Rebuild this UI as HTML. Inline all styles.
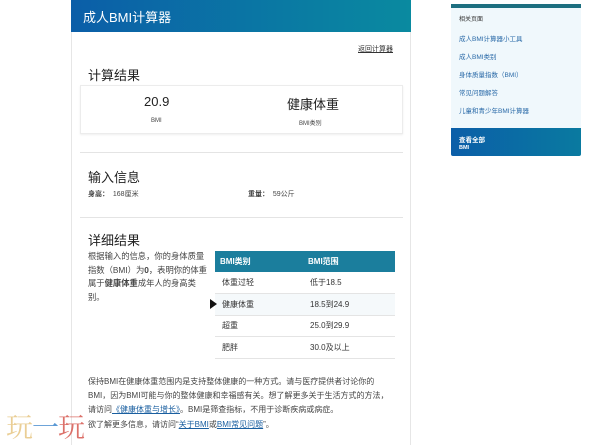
<!DOCTYPE html>
<html><head><meta charset="utf-8"><style>
*{margin:0;padding:0;box-sizing:border-box}
body{width:600px;height:445px;background:#fff;position:relative;overflow:hidden;font-family:"Liberation Sans","Noto Sans CJK SC",sans-serif;color:#333}
.a{position:absolute;white-space:nowrap}
.hdr{left:71px;top:0;width:340px;height:32px;background:linear-gradient(90deg,#0b5ea8,#0a8aa0);color:#fff;font-size:13px;padding:7px 0 0 12px}
.main{left:71px;top:32px;width:340px;height:413px;border-left:1px solid #e6e6e6;border-right:1px solid #e6e6e6;background:#fff}
.h2{font-size:13px;color:#222}
.s{font-size:7px;color:#444}
.p{font-size:8px;color:#444}
a{color:#1a5fa0;text-decoration:underline}
table{border-collapse:collapse;font-size:8px}
td{height:21.5px;padding-left:7px;border-bottom:1px solid #e4e4e4;color:#333}
th{height:21px;background:#1b7e9d;color:#fff;text-align:left;padding-left:5px;font-weight:bold;font-size:8px}
</style></head><body>
<div class="a hdr">成人BMI计算器</div>
<div class="a main"></div>
<div class="a s" style="left:358px;top:44px;text-decoration:underline;color:#333">返回计算器</div>
<div class="a h2" style="left:88px;top:65px">计算结果</div>
<div class="a" style="left:80px;top:85px;width:323px;height:49px;border:1px solid #ececec;box-shadow:0 1px 2px #eee"></div>
<div class="a" style="left:144px;top:94px;font-size:13px;color:#222">20.9</div>
<div class="a s" style="left:151px;top:118px;font-size:6px">BMI</div>
<div class="a" style="left:287px;top:94px;font-size:13px;color:#222">健康体重</div>
<div class="a s" style="left:299px;top:118px;font-size:6px">BMI类别</div>
<div class="a" style="left:80px;top:152px;width:323px;border-top:1px solid #e4e4e4"></div>
<div class="a h2" style="left:88px;top:167px">输入信息</div>
<div class="a s" style="left:88px;top:189px"><b>身高：</b>&nbsp; 168厘米</div>
<div class="a s" style="left:248px;top:189px"><b>重量：</b>&nbsp; 59公斤</div>
<div class="a" style="left:80px;top:217px;width:323px;border-top:1px solid #e4e4e4"></div>
<div class="a h2" style="left:88px;top:230px">详细结果</div>
<div class="a p" style="left:88px;top:250px;line-height:13.7px;white-space:normal;width:119px;font-size:8.3px">根据输入的信息，你的身体质量指数（BMI）为<b>0</b>，表明你的体重属于<b>健康体重</b>成年人的身高类别。</div>
<table class="a" style="left:215px;top:251px;width:180px">
<tr><th style="width:88px">BMI类别</th><th>BMI范围</th></tr>
<tr><td>体重过轻</td><td>低于18.5</td></tr>
<tr style="background:#f5f9fb"><td>健康体重</td><td>18.5到24.9</td></tr>
<tr><td>超重</td><td>25.0到29.9</td></tr>
<tr><td>肥胖</td><td>30.0及以上</td></tr>
</table>
<div class="a" style="left:210px;top:299px;width:0;height:0;border-left:7px solid #111;border-top:5px solid transparent;border-bottom:5px solid transparent"></div>
<div class="a p" style="left:88px;top:375px;line-height:14px;white-space:normal;width:302px">保持BMI在健康体重范围内是支持整体健康的一种方式。请与医疗提供者讨论你的BMI，因为BMI可能与你的整体健康和幸福感有关。想了解更多关于生活方式的方法，请访问<a>《健康体重与增长》</a>。BMI是筛查指标，不用于诊断疾病或病症。</div>
<div class="a p" style="left:88px;top:419px">欲了解更多信息，请访问“<a>关于BMI</a>或<a>BMI常见问题</a>”。</div>
<div class="a" style="left:6px;top:406px;font-size:27px;font-family:'Noto Serif CJK SC',serif;color:#e8c98a;opacity:.9;letter-spacing:-1px">玩<span style="color:#4a8fd0">一</span><span style="color:#d9625a">玩</span></div>
<div class="a" style="left:451px;top:4px;width:130px;height:4px;background:#1d6f80"></div>
<div class="a" style="left:451px;top:8px;width:130px;height:120px;background:#f0f8fc"></div>
<div class="a" style="left:459px;top:14px;font-size:6px;color:#333">相关页面</div>
<div class="a" style="left:459px;top:33px;font-size:6.5px;color:#2a6aa8">成人BMI计算器小工具</div>
<div class="a" style="left:459px;top:51px;font-size:6.5px;color:#2a6aa8">成人BMI类别</div>
<div class="a" style="left:459px;top:69px;font-size:6.5px;color:#2a6aa8">身体质量指数（BMI）</div>
<div class="a" style="left:459px;top:87px;font-size:6.5px;color:#2a6aa8">常见问题解答</div>
<div class="a" style="left:459px;top:105px;font-size:6.5px;color:#2a6aa8">儿童和青少年BMI计算器</div>
<div class="a" style="left:451px;top:128px;width:130px;height:28px;background:linear-gradient(90deg,#0b5ea8,#0a7aa0);border-radius:0 0 2px 2px"></div>
<div class="a" style="left:459px;top:134px;font-size:6.5px;color:#fff;font-weight:bold">查看全部</div>
<div class="a" style="left:459px;top:145px;font-size:5.5px;color:#fff;font-weight:bold">BMI</div>
</body></html>
